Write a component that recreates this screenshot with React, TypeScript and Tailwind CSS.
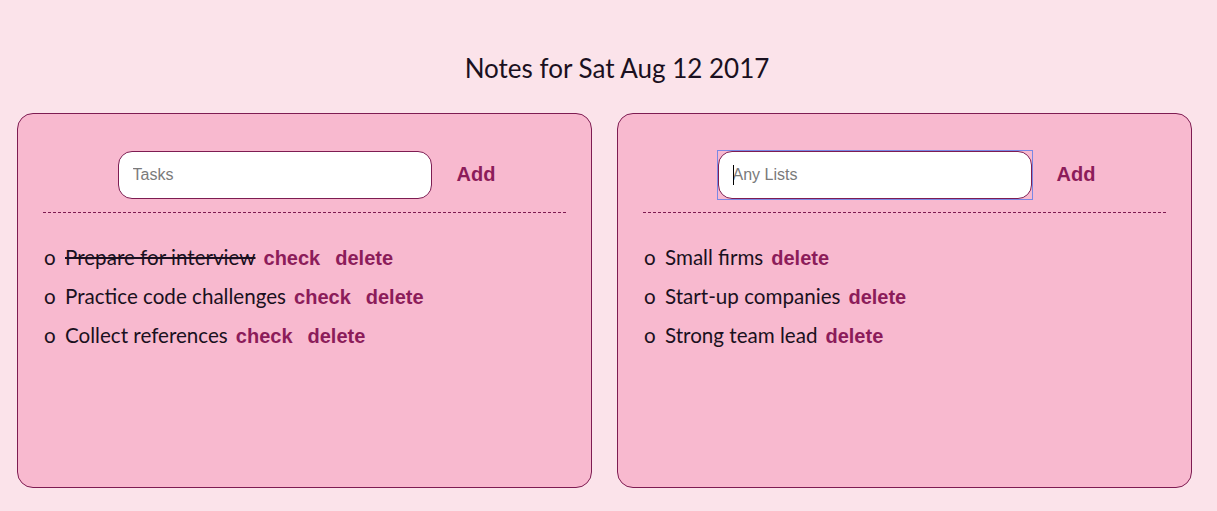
const tasks = [
  { text: "Prepare for interview", done: true },
  { text: "Practice code challenges", done: false },
  { text: "Collect references", done: false },
];

const lists = ["Small firms", "Start-up companies", "Strong team lead"];

const linkCls = "font-['Liberation_Sans',Arial,sans-serif] font-bold text-[20px] text-[#8c1c5a]";

const Card = ({ children, placeholder, focused }: { children: React.ReactNode; placeholder: string; focused?: boolean }) => (
  <div className="h-[375px] w-[575px] rounded-[16px] border border-[#7e1c52] bg-[#f8b9cf] px-[25px] pt-[36px]">
    <div className="flex items-center justify-center gap-[24px] pl-[3px]">
      <div className={focused ? "relative border border-[#7b88e4]" : "relative border border-transparent"}>
        <input
          placeholder={placeholder}
          className="block h-[48px] w-[314px] rounded-[14px] border border-[#7e1c52] bg-white px-[14px] font-['Liberation_Sans',Arial,sans-serif] text-[16px] text-black outline-none placeholder:text-[#7a7a7a]"
        />
        {focused && <span className="absolute left-[15px] top-[14px] h-[20px] w-px bg-black" />}
      </div>
      <button className={linkCls + " mb-[2px]"}>Add</button>
    </div>
    <div className="mt-[12px] border-t border-dashed border-[#7e1c52]" />
    <ul className="mt-[29px] flex flex-col gap-[13px] pl-[1px]">{children}</ul>
  </div>
);

export default function App() {
  return (
    <div className="min-h-[511px] bg-[#fbe3ea] font-['Lato',sans-serif] text-[#1a1020]">
      <h1 className="pl-[17px] pt-[50px] text-center text-[26px] leading-[36px]">Notes for Sat Aug 12 2017</h1>
      <div className="mt-[27px] flex gap-[25px] pl-[17px]">
        <Card placeholder="Tasks">
          {tasks.map((t) => (
            <li key={t.text} className="flex h-[26px] items-baseline text-[20.6px]">
              <span className="w-[21px]">o</span>
              <span className={t.done ? "line-through" : ""}>{t.text}</span>
              <button className={linkCls + " ml-[8px]"}>check</button>
              <button className={linkCls + " ml-[15px]"}>delete</button>
            </li>
          ))}
        </Card>
        <Card placeholder="Any Lists" focused>
          {lists.map((l) => (
            <li key={l} className="flex h-[26px] items-baseline text-[20.6px]">
              <span className="w-[21px]">o</span>
              <span>{l}</span>
              <button className={linkCls + " ml-[8px]"}>delete</button>
            </li>
          ))}
        </Card>
      </div>
    </div>
  );
}
